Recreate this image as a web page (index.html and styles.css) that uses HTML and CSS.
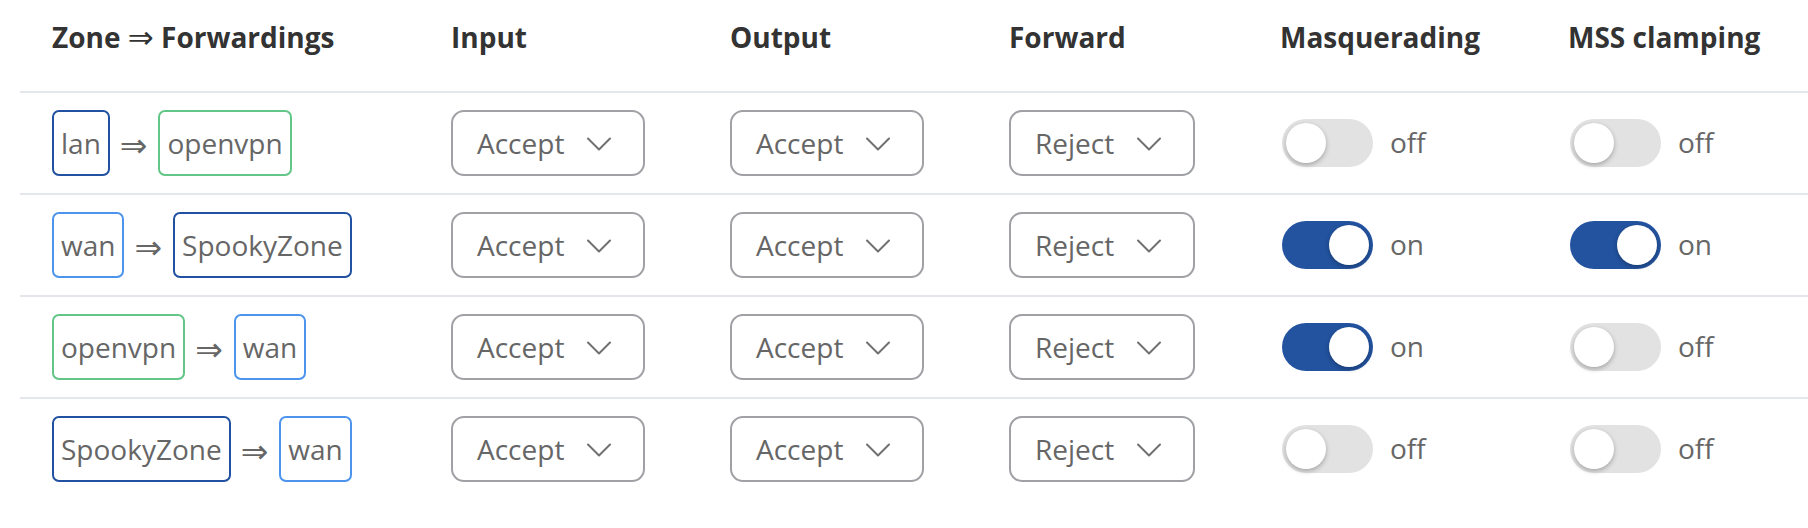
FILE: index.html
```html
<!DOCTYPE html>
<html>
<head>
<meta charset="utf-8">
<link rel="stylesheet" href="styles.css">
</head>
<body>
<table class="fw">
  <colgroup>
    <col class="c1"><col class="c2"><col class="c3"><col class="c4"><col class="c5"><col class="c6">
  </colgroup>
  <thead>
    <tr>
      <th>Zone <span class="harrow">⇒</span> Forwardings</th>
      <th>Input</th>
      <th>Output</th>
      <th>Forward</th>
      <th>Masquerading</th>
      <th>MSS clamping</th>
    </tr>
  </thead>
  <tbody>
    <tr>
      <td><div class="zones"><span class="zone z-lan">lan</span><span class="arrow">⇒</span><span class="zone z-vpn">openvpn</span></div></td>
      <td><div class="select"><span>Accept</span><svg class="chev" width="24" height="14" viewBox="0 0 24 14"><path d="M1 1.5 L12 12.5 L23 1.5" /></svg></div></td>
      <td><div class="select"><span>Accept</span><svg class="chev" width="24" height="14" viewBox="0 0 24 14"><path d="M1 1.5 L12 12.5 L23 1.5" /></svg></div></td>
      <td><div class="select"><span>Reject</span><svg class="chev" width="24" height="14" viewBox="0 0 24 14"><path d="M1 1.5 L12 12.5 L23 1.5" /></svg></div></td>
      <td><div class="switch"><span class="track"><span class="knob"></span></span><span class="label">off</span></div></td>
      <td><div class="switch"><span class="track"><span class="knob"></span></span><span class="label">off</span></div></td>
    </tr>
    <tr>
      <td><div class="zones"><span class="zone z-wan">wan</span><span class="arrow">⇒</span><span class="zone z-lan">SpookyZone</span></div></td>
      <td><div class="select"><span>Accept</span><svg class="chev" width="24" height="14" viewBox="0 0 24 14"><path d="M1 1.5 L12 12.5 L23 1.5" /></svg></div></td>
      <td><div class="select"><span>Accept</span><svg class="chev" width="24" height="14" viewBox="0 0 24 14"><path d="M1 1.5 L12 12.5 L23 1.5" /></svg></div></td>
      <td><div class="select"><span>Reject</span><svg class="chev" width="24" height="14" viewBox="0 0 24 14"><path d="M1 1.5 L12 12.5 L23 1.5" /></svg></div></td>
      <td><div class="switch on"><span class="track"><span class="knob"></span></span><span class="label">on</span></div></td>
      <td><div class="switch on"><span class="track"><span class="knob"></span></span><span class="label">on</span></div></td>
    </tr>
    <tr>
      <td><div class="zones"><span class="zone z-vpn">openvpn</span><span class="arrow">⇒</span><span class="zone z-wan">wan</span></div></td>
      <td><div class="select"><span>Accept</span><svg class="chev" width="24" height="14" viewBox="0 0 24 14"><path d="M1 1.5 L12 12.5 L23 1.5" /></svg></div></td>
      <td><div class="select"><span>Accept</span><svg class="chev" width="24" height="14" viewBox="0 0 24 14"><path d="M1 1.5 L12 12.5 L23 1.5" /></svg></div></td>
      <td><div class="select"><span>Reject</span><svg class="chev" width="24" height="14" viewBox="0 0 24 14"><path d="M1 1.5 L12 12.5 L23 1.5" /></svg></div></td>
      <td><div class="switch on"><span class="track"><span class="knob"></span></span><span class="label">on</span></div></td>
      <td><div class="switch"><span class="track"><span class="knob"></span></span><span class="label">off</span></div></td>
    </tr>
    <tr>
      <td><div class="zones"><span class="zone z-lan">SpookyZone</span><span class="arrow">⇒</span><span class="zone z-wan">wan</span></div></td>
      <td><div class="select"><span>Accept</span><svg class="chev" width="24" height="14" viewBox="0 0 24 14"><path d="M1 1.5 L12 12.5 L23 1.5" /></svg></div></td>
      <td><div class="select"><span>Accept</span><svg class="chev" width="24" height="14" viewBox="0 0 24 14"><path d="M1 1.5 L12 12.5 L23 1.5" /></svg></div></td>
      <td><div class="select"><span>Reject</span><svg class="chev" width="24" height="14" viewBox="0 0 24 14"><path d="M1 1.5 L12 12.5 L23 1.5" /></svg></div></td>
      <td><div class="switch"><span class="track"><span class="knob"></span></span><span class="label">off</span></div></td>
      <td><div class="switch"><span class="track"><span class="knob"></span></span><span class="label">off</span></div></td>
    </tr>
  </tbody>
</table>
</body>
</html>
```

FILE: styles.css
```css
html, body {
  margin: 0;
  padding: 0;
  background: #ffffff;
}

body {
  font-family: "Open Sans", "DejaVu Sans", sans-serif;
  font-size: 28px;
  color: #666666;
}

.fw {
  margin-left: 20px;
  width: 1788px;
  border-collapse: separate;
  border-spacing: 0;
  table-layout: fixed;
}

.c1 { width: 399px; }
.c2 { width: 279px; }
.c3 { width: 279px; }
.c4 { width: 271px; }
.c5 { width: 288px; }
.c6 { width: 272px; }

.fw th {
  text-align: left;
  font-size: 28px;
  font-weight: 700;
  color: #333333;
  line-height: 42px;
  height: 42px;
  padding: 16px 0 33px 32px;
  border-bottom: 2px solid #e3e6eb;
  vertical-align: top;
  white-space: nowrap;
}

.harrow {
  font-size: 31px;
  font-weight: 400;
  line-height: 0;
}

.fw td {
  padding: 0 0 0 32px;
  height: 100px;
  border-bottom: 2px solid #e3e6eb;
  vertical-align: middle;
  white-space: nowrap;
}

.fw tbody tr:last-child td {
  border-bottom: none;
}

.zones {
  display: flex;
  align-items: center;
}

.zone {
  display: flex;
  align-items: center;
  height: 66px;
  box-sizing: border-box;
  border: 2px solid;
  border-radius: 7px;
  padding: 0 7px;
  color: #666666;
  line-height: 1;
}

.z-lan { border-color: #2151a0; }
.z-vpn { border-color: #62c686; }
.z-wan { border-color: #4d94ee; }

.arrow {
  margin: 2px 11px 0 10px;
  font-size: 33px;
  color: #666666;
  line-height: 1;
}

.select {
  display: flex;
  width: fit-content;
  align-items: center;
  height: 66px;
  box-sizing: border-box;
  border: 2px solid #9fa1a5;
  border-radius: 13px;
  padding: 0 32px 0 24px;
  gap: 23px;
  color: #666666;
  line-height: 1;
}

.chev {
  display: block;
  margin-top: 2px;
}

.chev path {
  fill: none;
  stroke: #707070;
  stroke-width: 2;
  stroke-linecap: round;
  stroke-linejoin: round;
}

.switch {
  display: flex;
  align-items: center;
  gap: 17px;
  margin-left: 2px;
}

.track {
  position: relative;
  display: block;
  width: 91px;
  height: 48px;
  border-radius: 24px;
  background: #e2e2e2;
}

.knob {
  position: absolute;
  top: 4px;
  left: 4px;
  width: 40px;
  height: 40px;
  border-radius: 50%;
  background: #ffffff;
  box-shadow: 0 2px 5px rgba(0, 0, 0, 0.28);
}

.switch.on .track {
  background: #23539f;
}

.switch.on .knob {
  left: 47px;
}

.label {
  color: #666666;
  line-height: 1;
  margin-top: -2px;
}
```
